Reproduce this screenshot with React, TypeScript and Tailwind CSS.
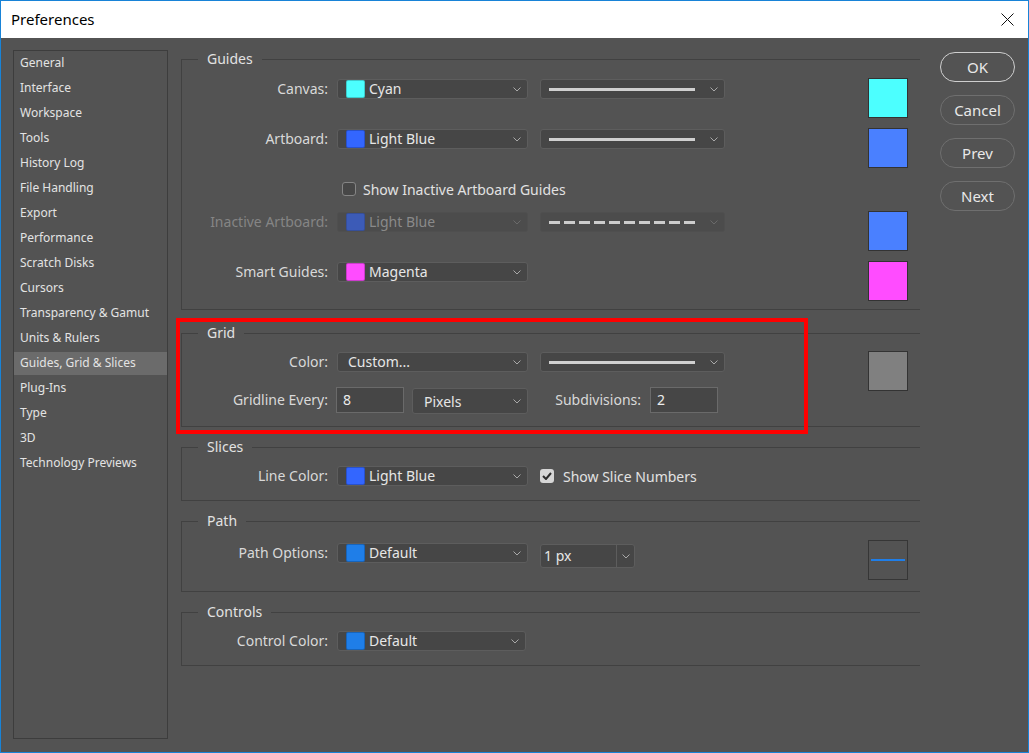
import React from 'react';

const font = { fontFamily: '"Noto Sans", "Open Sans", sans-serif' };

const navItems = [
  'General', 'Interface', 'Workspace', 'Tools', 'History Log', 'File Handling', 'Export',
  'Performance', 'Scratch Disks', 'Cursors', 'Transparency & Gamut', 'Units & Rulers',
  'Guides, Grid & Slices', 'Plug-Ins', 'Type', '3D', 'Technology Previews',
];

const Chevron: React.FC<{ dim?: boolean }> = ({ dim }) => (
  <svg width="8" height="5" viewBox="0 0 8 5" className="shrink-0">
    <polyline points="0.5,0.5 4,4 7.5,0.5" fill="none" stroke={dim ? '#6a6a6a' : '#a9a9a9'} strokeWidth="1" />
  </svg>
);

interface DropProps {
  w: string;
  swatch?: string;
  text: string;
  disabled?: boolean;
}

const ColorDrop: React.FC<DropProps> = ({ w, swatch, text, disabled }) => (
  <div className={`${w} h-[20px] flex items-center border rounded-[3px] pr-[6px] shrink-0 ${swatch ? 'pl-[8px]' : 'pl-[10px]'} ${disabled ? 'border-[#4f4f4f] bg-[#4c4c4c]' : 'bg-[#464646] border-[#5d5d5d]'}`}>
    {swatch && (
      <span className={`w-[19px] h-[18px] rounded-[2px] border border-black/20 mr-[4px] ${disabled ? 'opacity-60' : ''}`} style={{ background: swatch }} />
    )}
    <span className={`flex-1 text-[14px] leading-[20px] ${disabled ? 'text-[#8a8a8a]' : 'text-[#e6e6e6]'}`}>{text}</span>
    <Chevron dim={disabled} />
  </div>
);

const LineDrop: React.FC<{ dashed?: boolean; disabled?: boolean }> = ({ dashed, disabled }) => (
  <div className={`ml-[3px] w-[185px] h-[20px] flex items-center border rounded-[3px] pl-[8px] pr-[6px] shrink-0 ${disabled ? 'bg-[#4c4c4c] border-[#4f4f4f]' : 'bg-[#464646] border-[#5d5d5d]'}`}>
    <div className="w-[146px] flex items-center justify-between">
      {dashed
        ? Array.from({ length: 10 }).map((_, i) => <span key={i} className="w-[11px] h-[3px] bg-[#cdcdcd]" />)
        : <span className="w-full h-[3px] bg-[#d0d0d0]" />}
    </div>
    <span className="flex-1" />
    <Chevron dim={disabled} />
  </div>
);

const Swatch: React.FC<{ color: string }> = ({ color }) => (
  <div className="w-[40px] h-[40px] border border-[#333333] ml-auto shrink-0" style={{ background: color }} />
);

const Label: React.FC<{ children: React.ReactNode; dim?: boolean; w?: string }> = ({ children, dim, w = 'w-[146px]' }) => (
  <span className={`${w} text-right text-[14px] leading-[20px] shrink-0 ${dim ? 'text-[#858585]' : 'text-[#d9d9d9]'}`}>{children}</span>
);

const Section: React.FC<{ title: string; className?: string; children: React.ReactNode }> = ({ title, className = '', children }) => (
  <fieldset className={`border-y border-l border-[#414141] pr-[12px] ${className}`}>
    <legend className="ml-[16px] px-[9px] text-[14px] leading-[20px] text-[#e2e2e2]">{title}</legend>
    {children}
  </fieldset>
);

const Input: React.FC<{ value: string }> = ({ value }) => (
  <div className="w-[68px] h-[26px] bg-[#464646] border border-[#6a6a6a] pl-[6px] text-[14px] leading-[24px] text-[#ececec]">{value}</div>
);

const App: React.FC = () => {
  return (
    <div className="w-[1029px] h-[753px] border border-[#1883d7] flex flex-col overflow-hidden" style={font}>
      <div className="h-[37px] bg-white flex items-center justify-between pl-[10px] pr-[14px] shrink-0">
        <span className="text-[15px] text-black">Preferences</span>
        <svg width="13" height="13" viewBox="0 0 13 13">
          <path d="M0.5 0.5 L12.5 12.5 M12.5 0.5 L0.5 12.5" stroke="#111" strokeWidth="1" />
        </svg>
      </div>

      <div className="flex-1 bg-[#535353] flex items-start pl-[12px]">
        {/* sidebar */}
        <div className="w-[155px] h-[689px] mt-[12px] border border-[#3d3d3d] shrink-0">
          {navItems.map(item => (
            <div key={item} className="h-[25px] flex items-center">
              <div className={`w-full h-[23px] flex items-center pl-[6px] pb-[1px] text-[12px] text-[#e3e3e3] ${item === 'Guides, Grid & Slices' ? 'bg-[#6b6b6b]' : ''}`}>
                {item}
              </div>
            </div>
          ))}
        </div>

        {/* main */}
        <div className="w-[739px] ml-[13px] mt-[11px] shrink-0">
          <Section title="Guides" className="pb-[8px]">
            <div className="flex items-start h-[40px] mt-[9px]">
              <div className="flex items-center gap-[9px] mt-[1px]">
                <Label>Canvas:</Label>
                <ColorDrop w="w-[191px]" swatch="#4cffff" text="Cyan" />
                <LineDrop />
              </div>
              <Swatch color="#4cffff" />
            </div>
            <div className="flex items-start h-[40px] mt-[10px]">
              <div className="flex items-center gap-[9px] mt-[1px]">
                <Label>Artboard:</Label>
                <ColorDrop w="w-[191px]" swatch="#3366ff" text="Light Blue" />
                <LineDrop />
              </div>
              <Swatch color="#4a80ff" />
            </div>
            <div className="flex items-center h-[20px] mt-[11px] pl-[160px] gap-[7px]">
              <span className="w-[14px] h-[14px] rounded-[3px] border border-[#858585] bg-[#474747]" />
              <span className="text-[14px] text-[#e2e2e2]">Show Inactive Artboard Guides</span>
            </div>
            <div className="flex items-start h-[40px] mt-[12px]">
              <div className="flex items-center gap-[9px] mt-[1px]">
                <Label dim>Inactive Artboard:</Label>
                <ColorDrop w="w-[191px]" swatch="#3366ff" text="Light Blue" disabled />
                <LineDrop dashed disabled />
              </div>
              <Swatch color="#4a80ff" />
            </div>
            <div className="flex items-start h-[40px] mt-[10px]">
              <div className="flex items-center gap-[9px] mt-[1px]">
                <Label>Smart Guides:</Label>
                <ColorDrop w="w-[191px]" swatch="#ff4cff" text="Magenta" />
              </div>
              <Swatch color="#ff4cff" />
            </div>
          </Section>

          <div className="relative mt-[13px]">
            <Section title="Grid" className="pb-[13px]">
              <div className="flex items-start">
                <div>
                  <div className="flex items-center gap-[9px] mt-[9px] h-[20px]">
                    <Label>Color:</Label>
                    <ColorDrop w="w-[191px]" text="Custom..." />
                    <LineDrop />
                  </div>
                  <div className="flex items-start mt-[15px] h-[26px]">
                    <Label w="w-[146px] mt-[3px]">Gridline Every:</Label>
                    <div className="ml-[8px]"><Input value="8" /></div>
                    <div className="ml-[8px] mt-[1px] w-[116px] h-[26px] flex items-center bg-[#464646] border border-[#5d5d5d] rounded-[3px] pl-[11px] pr-[6px]">
                      <span className="flex-1 text-[14px] text-[#e6e6e6]">Pixels</span>
                      <Chevron />
                    </div>
                    <Label w="w-[113px] mt-[3px]">Subdivisions:</Label>
                    <div className="ml-[9px]"><Input value="2" /></div>
                  </div>
                </div>
                <div className="ml-auto mt-[8px]">
                  <Swatch color="#808080" />
                </div>
              </div>
            </Section>
            <div className="absolute left-[-5px] top-[-5px] w-[632px] h-[116px] border-4 border-[#ff0000] pointer-events-none" />
          </div>

          <Section title="Slices" className="mt-[10px] pb-[14px]">
            <div className="flex items-center gap-[9px] mt-[9px] h-[20px]">
              <Label>Line Color:</Label>
              <ColorDrop w="w-[191px]" swatch="#3366ff" text="Light Blue" />
              <span className="ml-[3px] w-[14px] h-[14px] rounded-[3px] bg-[#d6d6d6] flex items-center justify-center">
                <svg width="10" height="8" viewBox="0 0 10 8">
                  <polyline points="1,4 4,7 9,1" fill="none" stroke="#2c2c2c" strokeWidth="2" />
                </svg>
              </span>
              <span className="text-[14px] text-[#e2e2e2]">Show Slice Numbers</span>
            </div>
          </Section>

          <Section title="Path" className="mt-[10px] pb-[11px]">
            <div className="flex items-start h-[40px] mt-[9px]">
              <div className="flex items-start gap-[9px] mt-[2px]">
                <Label w="w-[146px] mt-[1px]">Path Options:</Label>
                <div className="h-[21px] mt-[1px]">
                  <ColorDrop w="w-[191px]" swatch="#1f7ee8" text="Default" />
                </div>
                <div className="ml-[3px] mt-[2px] w-[95px] h-[24px] flex bg-[#464646] border border-[#5d5d5d] rounded-[3px]">
                  <span className="w-[76px] border-r border-[#5d5d5d] pl-[3px] text-[14px] leading-[22px] text-[#e6e6e6]">1 px</span>
                  <span className="flex-1 flex items-center justify-center"><Chevron /></span>
                </div>
              </div>
              <div className="w-[40px] h-[40px] border border-[#363636] ml-auto flex items-center px-[2px]">
                <span className="w-full h-[2px] bg-[#1f7ee8]" />
              </div>
            </div>
          </Section>

          <Section title="Controls" className="mt-[10px] pb-[14px]">
            <div className="flex items-center gap-[9px] mt-[9px] h-[20px]">
              <Label>Control Color:</Label>
              <ColorDrop w="w-[189px]" swatch="#1f7ee8" text="Default" />
            </div>
          </Section>
        </div>

        {/* buttons */}
        <div className="w-[75px] ml-[20px] mt-[14px] flex flex-col gap-[13px] shrink-0">
          {['OK', 'Cancel', 'Prev', 'Next'].map(b => (
            <button
              key={b}
              className={`h-[30px] w-full rounded-full border text-[15px] text-[#e8e8e8] ${b === 'OK' ? 'border-[#cfcfcf]' : 'border-[#6f6f6f]'}`}
            >
              {b}
            </button>
          ))}
        </div>
      </div>
    </div>
  );
};

export default App;
